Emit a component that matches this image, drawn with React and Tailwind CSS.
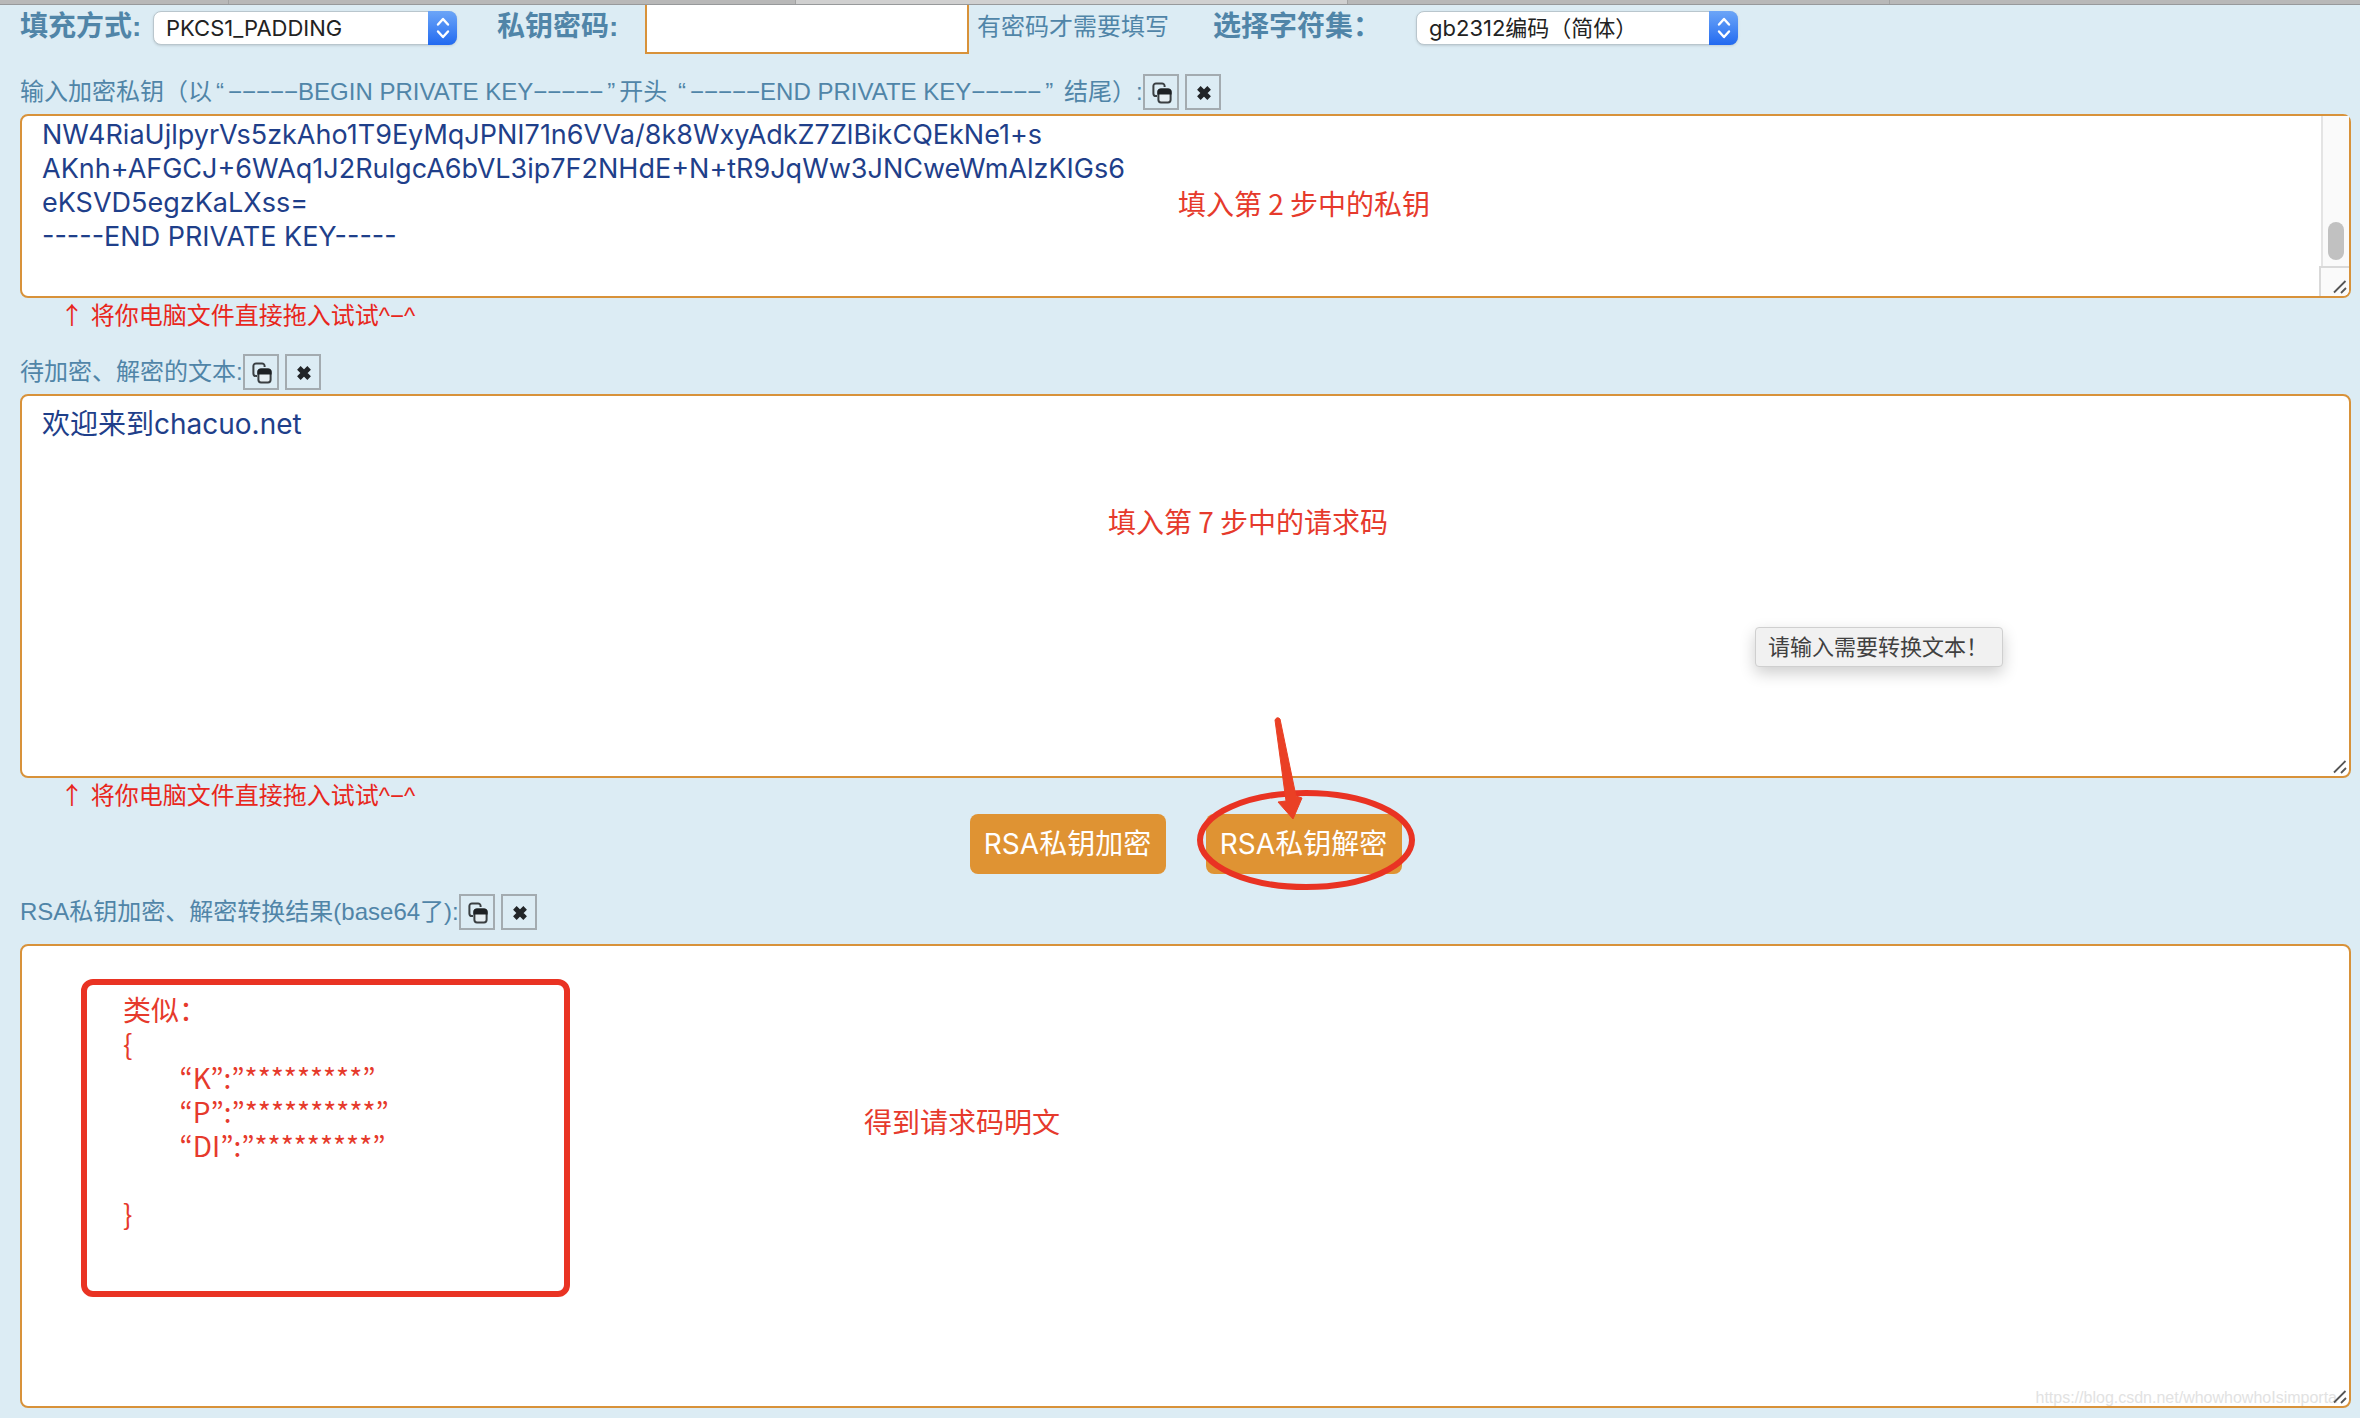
import React, { useState } from "react";

const PRIVATE_KEY = `NW4RiaUjlpyrVs5zkAho1T9EyMqJPNI71n6VVa/8k8WxyAdkZ7ZlBikCQEkNe1+s
AKnh+AFGCJ+6WAq1J2RulgcA6bVL3ip7F2NHdE+N+tR9JqWw3JNCweWmAlzKIGs6
eKSVD5egzKaLXss=
-----END PRIVATE KEY-----`;

const RESULT_SAMPLE = `
{
         “K”:”*********”
         “P”:”**********”
         “DI”:”*********”

}`;

const fieldClass =
  "block w-full resize-none overflow-hidden rounded-lg border-2 border-[#d8923a] bg-white px-5 font-['Inter','Noto_Sans_CJK_SC',sans-serif] leading-[34px] text-[#1f3f8a] outline-none";

const noteClass =
  "pointer-events-none absolute whitespace-pre font-['Noto_Sans_CJK_SC',sans-serif] text-[28px] leading-[34px] text-[#e63a2c]";

const CopyIcon = () => (
  <svg width="20" height="22" viewBox="0 0 20 22" aria-hidden="true">
    <path
      d="M5 14H4a2.6 2.6 0 0 1-2.6-2.6V4A2.6 2.6 0 0 1 4 1.4h6A2.6 2.6 0 0 1 12.6 4v1"
      fill="none"
      stroke="#3a3f42"
      strokeWidth="2"
    />
    <rect x="6.4" y="7.4" width="12.2" height="13" rx="2.6" fill="#e6eef2" stroke="#3a3f42" strokeWidth="2" />
    <path d="M5.4 12.5V10a3.6 3.6 0 0 1 3.6-3.6h7a3.6 3.6 0 0 1 3.6 3.6v2.5z" fill="#1d2023" />
  </svg>
);

const CloseIcon = () => (
  <svg width="16" height="16" viewBox="0 0 14 14" aria-hidden="true">
    <path d="M2.5 2.5l9 9M11.5 2.5l-9 9" stroke="#222528" strokeWidth="4.4" />
  </svg>
);

const Grip = () => (
  <svg
    className="pointer-events-none absolute bottom-1 right-1"
    width="14"
    height="14"
    viewBox="0 0 14 14"
    aria-hidden="true"
  >
    <path d="M1 12.5L12.5 1M8 13l5-5" stroke="#555" strokeWidth="1.8" fill="none" />
  </svg>
);

const IconButton = ({ label, onClick, children }) => (
  <button
    type="button"
    aria-label={label}
    onClick={onClick}
    className="flex h-9 w-9 items-center justify-center border-2 border-[#a3abb0] pt-0.5 pl-0.5"
  >
    {children}
  </button>
);

const FieldHeader = ({ htmlFor, value, onClear, children }) => (
  <div className="flex h-9 items-center">
    <label htmlFor={htmlFor} className="whitespace-pre text-2xl">
      {children}
    </label>
    <div className="flex gap-1.5">
      <IconButton label="复制" onClick={() => navigator.clipboard?.writeText(value)}>
        <CopyIcon />
      </IconButton>
      <IconButton label="清空" onClick={onClear}>
        <CloseIcon />
      </IconButton>
    </div>
  </div>
);

const Quote = ({ children }) => <span className="px-1">{children}</span>;

const DropHint = () => (
  <p className="h-9 whitespace-pre pl-10 text-2xl leading-8 text-[#e8271c]">
    <span className="font-['Noto_Sans_CJK_SC',sans-serif]">↑</span> 将你电脑文件直接拖入试试^−^
  </p>
);

const Select = ({ id, className, children }) => (
  <div className={`relative h-[34px] ${className}`}>
    <select
      id={id}
      className="h-full w-full appearance-none rounded-lg border border-[#b9c6cd] bg-white pl-3 pr-9 font-['Inter','Noto_Sans_CJK_SC',sans-serif] text-[22px] leading-7 text-[#222] shadow-sm outline-none"
    >
      {children}
    </select>
    <span className="pointer-events-none absolute inset-y-0 right-0 flex w-[29px] items-center justify-center rounded-r-lg bg-linear-to-b from-[#6ca5f7] to-[#2169f0]">
      <svg
        width="14"
        height="22"
        viewBox="0 0 14 22"
        fill="none"
        stroke="#fff"
        strokeWidth="2.4"
        strokeLinecap="round"
        strokeLinejoin="round"
        aria-hidden="true"
      >
        <path d="M2 7.5l5-5.5 5 5.5M2 14.5l5 5.5 5-5.5" />
      </svg>
    </span>
  </div>
);

const ActionButton = ({ children }) => (
  <button
    type="button"
    className="h-[60px] w-[196px] whitespace-nowrap rounded-lg bg-[#df9333] font-['Inter','Noto_Sans_CJK_SC',sans-serif] text-[28px] leading-10 text-white"
  >
    {children}
  </button>
);

export default function App() {
  const [privateKey, setPrivateKey] = useState(PRIVATE_KEY);
  const [source, setSource] = useState("欢迎来到chacuo.net");
  const [result, setResult] = useState("");

  return (
    <div className="min-h-screen bg-[#dcecf4] pb-2.5 font-['Liberation_Sans','Noto_Sans_CJK_SC',sans-serif] text-[#5085a8]">
      {/* Browser tab strip edge */}
      <div className="grid h-[5px] grid-cols-[229fr_567fr_552fr_542fr_470fr] border-b border-[#97999b] bg-[#b8b8b8]">
        <div className="border-r border-[#a3a3a3]" />
        <div className="border-r border-[#a3a3a3]" />
        <div className="border-r border-[#a3a3a3] bg-[#d0d0d0]" />
        <div className="border-r border-[#a3a3a3]" />
        <div />
      </div>

      <main className="pl-5 pr-[9px]">
        {/* Options */}
        <div className="flex h-[49px] items-start">
          <label htmlFor="padding" className="w-[133px] text-[28px] leading-[44px] font-bold">
            填充方式:
          </label>
          <Select id="padding" className="mt-1.5 w-[304px]">
            <option>PKCS1_PADDING</option>
          </Select>
          <label htmlFor="password" className="ml-10 w-[148px] text-[28px] leading-[44px] font-bold">
            私钥密码:
          </label>
          <input
            id="password"
            type="text"
            className="h-full w-[324px] border-2 border-t-0 border-[#d8923a] bg-white px-3 text-2xl outline-none"
          />
          <span className="ml-2 text-2xl leading-[44px]">有密码才需要填写</span>
          <label htmlFor="charset" className="ml-11 w-[203px] text-[28px] leading-[44px] font-bold">
            选择字符集：
          </label>
          <Select id="charset" className="mt-1.5 w-[322px]">
            <option>gb2312编码（简体）</option>
          </Select>
        </div>

        {/* Private key */}
        <section className="mt-5">
          <FieldHeader htmlFor="private-key" value={privateKey} onClear={() => setPrivateKey("")}>
            输入加密私钥（以<Quote>“</Quote>−−−−−BEGIN PRIVATE KEY−−−−−<Quote>”</Quote>开头{" "}
            <Quote>“</Quote>−−−−−END PRIVATE KEY−−−−−<Quote>”</Quote> 结尾）:
          </FieldHeader>
          <div className="relative mt-1">
            <textarea
              id="private-key"
              rows={5}
              spellCheck={false}
              value={privateKey}
              onChange={(e) => setPrivateKey(e.target.value)}
              className={`${fieldClass} pt-0.5 pb-2 text-[27px]`}
            />
            <div className="pointer-events-none absolute inset-y-0.5 right-0.5 flex w-[30px] flex-col">
              <div className="ml-0.5 flex flex-1 flex-col items-center justify-end border-l-2 border-[#e4e4e4] bg-[#fafafa] pb-1.5">
                <div className="h-[38px] w-4 rounded-full bg-[#c1c1c1]" />
              </div>
              <div className="h-[30px] rounded-br-md border-t-2 border-l-2 border-[#d9d9d9] bg-[#fafafa]" />
            </div>
            <Grip />
            <p className={`${noteClass} left-[1158px] top-[72px]`}>填入第 2 步中的私钥</p>
          </div>
          <DropHint />
        </section>

        {/* Source text */}
        <section className="mt-5">
          <FieldHeader htmlFor="source" value={source} onClear={() => setSource("")}>
            待加密、解密的文本:
          </FieldHeader>
          <div className="relative mt-1">
            <textarea
              id="source"
              rows={10}
              spellCheck={false}
              value={source}
              onChange={(e) => setSource(e.target.value)}
              className={`${fieldClass} pt-[11px] pb-[29px] text-[28px]`}
            />
            <Grip />
            <p className={`${noteClass} left-[1088px] top-[110px]`}>填入第 7 步中的请求码</p>
            <div
              role="tooltip"
              className="pointer-events-none absolute left-[1735px] top-[233px] w-[248px] rounded-sm border border-[#cfcfcf] bg-[#f1f1f1] px-3 pb-1 font-['Noto_Sans_CJK_SC',sans-serif] text-[22px] leading-[34px] text-[#404040] shadow-[0_6px_16px_rgba(0,0,0,0.2)]"
            >
              请输入需要转换文本！
            </div>
          </div>
          <DropHint />
        </section>

        {/* Actions */}
        <div className="flex justify-center gap-10">
          <ActionButton>RSA私钥加密</ActionButton>
          <div className="relative">
            <ActionButton>RSA私钥解密</ActionButton>
            <svg
              className="pointer-events-none absolute -top-[100px] -left-3"
              width="224"
              height="180"
              viewBox="0 0 224 180"
              aria-hidden="true"
            >
              <ellipse cx="112" cy="126" rx="106" ry="47" fill="none" stroke="#e93323" strokeWidth="6" />
              <path
                d="M81 6Q83 2 86 5L102 82L108 84L99 105L84 88L92 87Z"
                fill="#ea4025"
                stroke="#ea4025"
                strokeLinejoin="round"
              />
            </svg>
          </div>
        </div>

        {/* Result */}
        <section className="mt-5">
          <FieldHeader htmlFor="result" value={result} onClear={() => setResult("")}>
            RSA私钥加密、解密转换结果(base64了):
          </FieldHeader>
          <div className="relative mt-3.5">
            <textarea
              id="result"
              rows={12}
              spellCheck={false}
              value={result}
              onChange={(e) => setResult(e.target.value)}
              className={`${fieldClass} pt-3 pb-10 text-[28px]`}
            />
            <pre className="pointer-events-none absolute left-[61px] top-[35px] h-[318px] w-[489px] rounded-xl border-6 border-[#e93323] px-9 py-[7px] font-['Noto_Sans_CJK_KR','Noto_Sans_CJK_SC',sans-serif] text-[28px] leading-[34px] text-[#e63a2c]">
              <span className="font-['Noto_Sans_CJK_SC',sans-serif]">类似：</span>
              {RESULT_SAMPLE}
            </pre>
            <p className={`${noteClass} left-[844px] top-[160px]`}>得到请求码明文</p>
            <p className="pointer-events-none absolute right-3.5 bottom-0 text-base leading-5 text-[#e2e2e2]">
              https://blog.csdn.net/whowhowhoIsimporta
            </p>
            <Grip />
          </div>
        </section>
      </main>
    </div>
  );
}
